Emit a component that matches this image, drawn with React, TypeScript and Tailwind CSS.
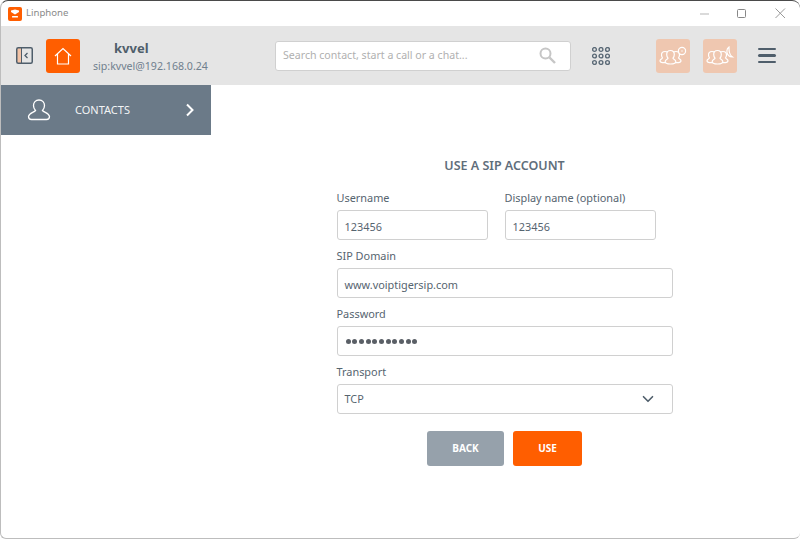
import { ChevronDown } from 'lucide-react';

const labelClass = 'h-[22px] text-[10.9px] leading-[20px] text-[#56646f]';

function Field({ label, value, className }: { label: string; value: string; className: string }) {
  return (
    <div className={className}>
      <div className={labelClass}>{label}</div>
      <div className="h-[30px] rounded-[3px] border border-[#d0d0d0] bg-white pl-[7px] text-[10.9px] leading-[31px] text-[#56646f]">{value}</div>
    </div>
  );
}

function Friends({ children }: { children: React.ReactNode }) {
  return (
    <div className="h-[34px] w-[34px] rounded-[3px] bg-[#efc7b0]">
      <svg width="34" height="34" viewBox="0 0 34 34" fill="#efc7b0" stroke="#fff" strokeWidth="1.200">
        <path d="M9 12.500c-2.300 0-3.500 1.600-3.500 3.500 0 1.200.5 2.200 1 3-.8 1-2.500 1.300-2.500 2.700 0 1.300 1.800 2 4.500 2 2 0 5-.5 5-2 0-3-1-3-1.500-3.700.5-.8 1-1.800 1-3 0-1.900-1.700-2.500-4-2.500z" />
        <path d="M20 12.500c2.300 0 3.500 1.600 3.500 3.500 0 1.200-.5 2.200-1 3 .8 1 2.500 1.300 2.500 2.700 0 1.300-1.800 2-4.500 2-2 0-5-.5-5-2 0-3 1-3 1.500-3.700-.5-.8-1-1.800-1-3 0-1.900 1.700-2.500 4-2.500z" />
        <path d="M14.500 11.500c-2.500 0-3.800 1.800-3.800 4 0 1.500.6 2.800 1.300 3.700-.8 1.300-2.800 1.700-2.800 3.300 0 1.700 2.500 2.500 5.300 2.500s5.300-.8 5.300-2.500c0-1.600-2-2-2.800-3.300.7-.9 1.300-2.200 1.300-3.700 0-2.200-1.300-4-3.800-4z" />
        {children}
      </svg>
    </div>
  );
}

export default function App() {
  return (
    <div className="flex h-[539px] w-[800px] flex-col overflow-hidden rounded-t-[8px] rounded-b-[6px] border-t border-l border-b border-t-[#4a4a4a] border-l-[#bdbdbd] border-b-[#bdbdbd] bg-white font-['Noto_Sans','Open_Sans',sans-serif]">
      {/* title bar */}
      <div className="flex h-[25px] shrink-0 items-center pl-[7px]">
        <div className="flex h-[14px] w-[14px] items-center justify-center rounded-[2px] bg-[#ff5e00]">
          <svg width="10" height="10" viewBox="0 0 10 10" fill="#fff">
            <path d="M1 1.500 5 .5 9 1.500 9 3 5 5.500 1 3z" />
            <rect x="2" y="7" width="6" height="1.600" rx=".5" />
          </svg>
        </div>
        <span className="ml-[4px] text-[9.6px] text-[#8a8a8a]">Linphone</span>
        <div className="ml-auto flex items-center">
          <svg width="10" height="10" viewBox="0 0 10 10" className="mr-[27px]" stroke="#b5b5b5" fill="none"><path d="M0 5h9" /></svg>
          <svg width="10" height="10" viewBox="0 0 10 10" className="mr-[28px]" stroke="#888" fill="none"><rect x=".5" y=".5" width="8" height="8" rx="1" /></svg>
          <svg width="11" height="11" viewBox="0 0 11 11" className="mr-[14px]" stroke="#999" fill="none"><path d="M.5.500l9.500 9.500M10 .5.500 10" /></svg>
        </div>
      </div>

      {/* toolbar */}
      <div className="flex h-[59px] shrink-0 items-center bg-[#e5e5e5]">
        <svg width="17" height="17" viewBox="0 0 17 17" className="ml-[15px]" fill="none">
          <rect x="1" y="1" width="4.500" height="15" fill="#f3c3a6" />
          <rect x=".75" y=".75" width="15.500" height="15.500" rx="1.500" stroke="#4f5e6b" strokeWidth="1.500" />
          <path d="M5.500 1v15" stroke="#4f5e6b" />
          <path d="M11.500 6 9 8.500 11.500 11" stroke="#4f5e6b" strokeWidth="1.300" />
        </svg>
        <div className="ml-[13px] flex h-[34px] w-[34px] items-center justify-center rounded-[3px] bg-[#ff5e00]">
          <svg width="20" height="20" viewBox="0 0 20 20" fill="none" stroke="#fff" strokeWidth="1.200">
            <path d="M2 10 10 2.500 18 10M4.500 8v10h11V8" />
          </svg>
        </div>
        <div className="ml-[13px] flex w-[115px] flex-col">
          <span className="ml-[21px] text-[13px] leading-[20px] font-bold text-[#4f5e6b]">kvvel</span>
          <span className="text-[10.6px] leading-[16px] whitespace-nowrap text-[#70808e]">sip:kvvel@192.168.0.24</span>
        </div>
        <div className="ml-[67px] flex h-[30px] w-[296px] items-center rounded-[3px] border border-[#d0d0d0] bg-white pl-[7px] pr-[14px]">
          <span className="text-[10.6px] text-[#b0b0b0]">Search contact, start a call or a chat...</span>
          <svg width="17" height="17" viewBox="0 0 17 17" className="ml-auto" fill="none" stroke="#c6c6c6" strokeWidth="2">
            <circle cx="6.500" cy="6.500" r="5" />
            <path d="M10.500 10.500 16 16" strokeWidth="2.400" />
          </svg>
        </div>
        <svg width="18" height="18" viewBox="0 0 18 18" className="ml-[21px]" fill="none" stroke="#5a6976" strokeWidth="1.400">
          {[2.500, 9, 15.500].map((y) =>
            [2.500, 9, 15.500].map((x) => <circle key={`${x}-${y}`} cx={x} cy={y} r="1.900" />),
          )}
        </svg>
        <div className="ml-[46px]">
          <Friends>
            <circle cx="26" cy="12" r="3.600" />
            <circle cx="26" cy="12" r=".7" stroke="none" fill="#fff" />
          </Friends>
        </div>
        <div className="ml-[13px]">
          <Friends>
            <path d="M26 8c-2.500 1.500-3 6-.5 8.500 1 1 2.500 1.500 4 1.500-1.500-1-2.800-2.500-3.200-5-.3-1.800-.3-3.500-.3-5z" />
          </Friends>
        </div>
        <div className="ml-[21px] flex w-[18px] flex-col gap-[4px]">
          <div className="h-[2.500px] rounded-full bg-[#4f5e6b]" />
          <div className="h-[2.500px] rounded-full bg-[#4f5e6b]" />
          <div className="h-[2.500px] rounded-full bg-[#4f5e6b]" />
        </div>
      </div>

      <div className="flex min-h-0 flex-1">
        {/* side menu */}
        <div className="w-[210px] shrink-0">
          <div className="flex h-[50px] items-center bg-[#6b7a88] text-white">
            <svg width="24" height="22" viewBox="0 0 24 22" className="ml-[26px]" fill="none" stroke="#fff" strokeWidth="1.300">
              <path d="M12 1c-3.500 0-5.500 2.500-5.500 5.500 0 2 .8 3.800 2 5-1.500 2-6.500 2.500-7 6 0 2 1.500 3 3 3h15c1.500 0 3-1 3-3-.5-3.500-5.500-4-7-6 1.200-1.200 2-3 2-5C17.500 3.500 15.500 1 12 1z" />
            </svg>
            <span className="ml-[24px] text-[11px] text-[#f2f4f5]">CONTACTS</span>
            <svg width="10" height="14" viewBox="0 0 10 14" className="ml-[55px]" fill="none" stroke="#fff" strokeWidth="2">
              <path d="M2 1.500 7.500 7 2 12.500" />
            </svg>
          </div>
        </div>

        {/* assistant form */}
        <div className="flex flex-1 flex-col items-center pt-[70px] pr-[2px]">
          <div className="w-[336px]">
            <div className="h-[23px] text-center text-[12.5px] leading-[21px] font-semibold text-[#5f6e7b]">USE A SIP ACCOUNT</div>
            <div className="mt-[10px] flex gap-[17px]">
              <Field label="Username" value="123456" className="w-[151px]" />
              <Field label="Display name (optional)" value="123456" className="w-[151px]" />
            </div>
            <Field label="SIP Domain" value="www.voiptigersip.com" className="mt-[6px]" />
            <div className="mt-[6px]">
              <div className={labelClass}>Password</div>
              <div className="flex h-[30px] items-center gap-[1.700px] rounded-[3px] border border-[#d0d0d0] bg-white pl-[8px]">
                {Array.from({ length: 11 }).map((_, i) => (
                  <span key={i} className="h-[5px] w-[5px] rounded-full bg-[#5a5f66]" />
                ))}
              </div>
            </div>
            <div className="mt-[6px]">
              <div className={labelClass}>Transport</div>
              <div className="flex h-[30px] items-center rounded-[3px] border border-[#d0d0d0] bg-white pl-[7px] pr-[15px] text-[10.9px] text-[#56646f]">
                TCP
                <ChevronDown size={18} strokeWidth={2.2} className="ml-auto text-[#4f5e6b]" />
              </div>
            </div>
            <div className="mt-[17px] flex justify-center gap-[9px]">
              <div className="flex h-[35px] w-[77px] items-center justify-center rounded-[3px] bg-[#96a1ab] text-[10px] font-bold text-white">BACK</div>
              <div className="flex h-[35px] w-[69px] items-center justify-center rounded-[3px] bg-[#ff5e00] text-[10px] font-bold text-white">USE</div>
            </div>
          </div>
        </div>
      </div>
    </div>
  );
}
